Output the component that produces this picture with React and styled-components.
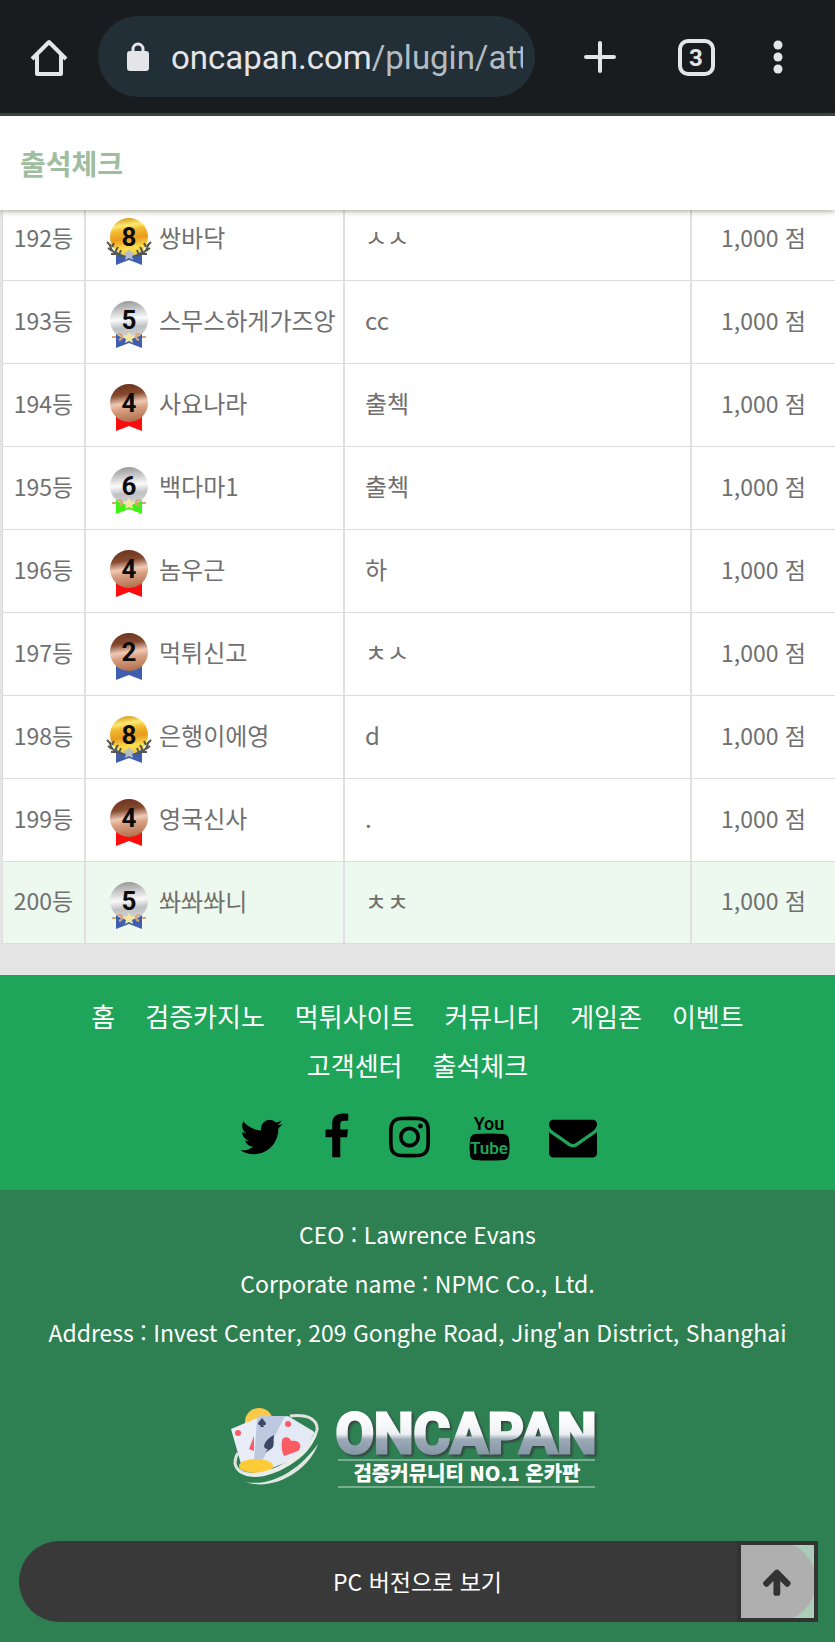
import React from 'react'
import styled, { createGlobalStyle } from 'styled-components';


const GlobalStyle = createGlobalStyle`
    * {
        box-sizing: border-box;
    }
    body {
        margin: 0;
        background: #e5e5e5;
        color: #707070;
        font-family: 'Noto Sans CJK KR', sans-serif;
        font-size: 23px;
    }
    button {
        border: 0;
        padding: 0;
        background: none;
        color: inherit;
        font: inherit;
        cursor: pointer;
    }
    a {
        color: inherit;
        text-decoration: none;
    }
    svg {
        display: block;
    }
`;

const Toolbar = styled.div`
    display: flex;
    align-items: center;
    padding: 16px 23px 16px 0;
    background: #191c1f;
    border-bottom: 3px solid #3b434a;
`;

const ToolButton = styled.button`
    flex: none;
    display: flex;
    align-items: center;
    justify-content: center;
    width: ${props => props.$width}px;
    height: 80px;
    color: #e3e5e8;
`;

const AddressBar = styled.button`
    flex: 1;
    min-width: 0;
    display: flex;
    align-items: center;
    gap: 22px;
    height: 81px;
    margin-right: 17px;
    padding: 0 12px 0 29px;
    border-radius: 41px;
    background: #232f36;
    color: #e3e5e8;
    text-align: left;
`;

const Url = styled.span`
    flex: 1;
    overflow: hidden;
    white-space: nowrap;
    font-family: Roboto, sans-serif;
    font-size: 33px;
    line-height: 48px;
    padding-top: 2px;
`;

const UrlPath = styled.span`
    color: #b4bcc3;
`;

const PageHeader = styled.header`
    position: relative;
    z-index: 1;
    padding: 0 20px;
    background: #fff;
    box-shadow: 0 1px 6px rgba(70, 70, 30, 0.5);
`;

const PageTitle = styled.h1`
    margin: 0;
    font-size: 28px;
    font-weight: 700;
    line-height: 94px;
    color: #a0bd9f;
`;

const Ranking = styled.main`
    margin-top: -12px;
    padding: 0 0 31px 2px;
`;

const Table = styled.table`
    width: 100%;
    table-layout: fixed;
    border-collapse: separate;
    border-spacing: 0;
    border-left: 1px solid #dcdcdc;
    background: #fff;
`;

const Cell = styled.td`
    width: ${props => props.$width ? props.$width + 'px' : 'auto'};
    height: 83px;
    padding: ${props => props.$center ? '0 0 5px' : '0 0 5px 20px'};
    border-bottom: 1px solid #dcdcdc;
    border-right: 2px solid #dfdfdf;
    font-size: ${props => props.$center ? 23 : 24}px;
    text-align: ${props => props.$center ? 'center' : 'left'};
    white-space: nowrap;
    &:last-child {
        border-right: 0;
    }
    tr:last-child > & {
        height: 82px;
        background: #edf8ef;
    }
`;

const Member = styled.div`
    display: flex;
    align-items: center;
    gap: 7px;
`;

const MedalBox = styled.svg`
    flex: none;
    margin-top: 9px;
`;

const SiteNav = styled.nav`
    padding: 16px 60px 29px;
    background: #1fa559;
    color: #fff;
`;

const Links = styled.div`
    display: flex;
    flex-wrap: wrap;
    justify-content: center;
    column-gap: 30px;
    font-size: 26px;
    line-height: 49px;
`;

const Socials = styled.div`
    display: flex;
    justify-content: center;
    gap: 39px;
    margin-top: 24px;
    color: #000;
`;

const Footer = styled.footer`
    padding: 20px 19px 20px;
    background: #2e8052;
    color: #fff;
    text-align: center;
`;

const Info = styled.p`
    margin: 0;
    line-height: 49px;
`;

const LogoLink = styled.a`
    display: flex;
    justify-content: center;
    margin: 42px 0 50px;
`;

const Wordmark = styled.text`
    font-family: Roboto, sans-serif;
    font-size: 56px;
    font-weight: 700;
    text-anchor: middle;
    fill: url(#chrome);
    stroke: url(#chrome);
    stroke-width: 3px;
    filter: drop-shadow(2px 2px 1px #34453f);
`;

const Actions = styled.div`
    position: relative;
`;

const PcButton = styled.button`
    width: 100%;
    height: 81px;
    padding-bottom: 2px;
    border-radius: 41px;
    background: #393939;
    color: #fff;
`;

const TopButton = styled.button`
    position: absolute;
    top: 0;
    right: -2px;
    display: flex;
    align-items: center;
    justify-content: center;
    width: 81px;
    height: 81px;
    border: 4px solid #333;
    background: rgba(255, 255, 255, 0.6);
    color: #333;
`;

const rows = [
    { rank: 192, level: 8, name: '쌍바닥', memo: 'ㅅㅅ' },
    { rank: 193, level: 5, name: '스무스하게가즈앙', memo: 'cc' },
    { rank: 194, level: 4, name: '사요나라', memo: '출첵' },
    { rank: 195, level: 6, name: '백다마1', memo: '출첵' },
    { rank: 196, level: 4, name: '놈우근', memo: '하' },
    { rank: 197, level: 2, name: '먹튀신고', memo: 'ㅊㅅ' },
    { rank: 198, level: 8, name: '은행이에영', memo: 'd' },
    { rank: 199, level: 4, name: '영국신사', memo: '.' },
    { rank: 200, level: 5, name: '쏴쏴쏴니', memo: 'ㅊㅊ' },
];

const menu = ['홈', '검증카지노', '먹튀사이트', '커뮤니티', '게임존', '이벤트', '고객센터', '출석체크'];

const medals = {
    2: { metal: 'bronze', ribbon: '#3f5fae' },
    4: { metal: 'bronze', ribbon: '#fb0d0d' },
    5: { metal: 'silver', ribbon: '#3f5fae' },
    6: { metal: 'silver', ribbon: '#3df312' },
    8: { metal: 'gold', ribbon: '#3f5fae' },
};

const icons = {
    twitter: {
        label: 'Twitter',
        box: '64 0 1664 1792',
        width: 45,
        path: 'M1684 408q-67 98-162 167 1 14 1 42 0 130-38 259.5t-115.5 248.5-184.5 210.5-258 146-323 54.5q-271 0-496-145 35 4 78 4 225 0 401-138-105-2-188-64.5t-114-159.5q33 5 61 5 43 0 85-11-112-23-185.5-111.5t-73.5-205.5v-4q68 38 146 41-66-44-105-115t-39-154q0-88 44-163 121 149 294.5 238.5t371.5 99.5q-8-38-8-74 0-134 94.5-228.5t228.5-94.5q140 0 236 102 109-21 205-78-37 115-142 178 93-10 186-50z',
    },
    facebook: {
        label: 'Facebook',
        box: '384 0 1024 1792',
        width: 27,
        path: 'M1343 12v264h-157q-86 0-116 36t-30 108v189h293l-39 296h-254v759h-306v-759h-255v-296h255v-218q0-186 104-288.5t277-102.5q147 0 228 12z',
    },
    instagram: {
        label: 'Instagram',
        box: '128 0 1536 1792',
        width: 41,
        path: 'M1152 896q0-106-75-181t-181-75-181 75-75 181 75 181 181 75 181-75 75-181zm138 0q0 164-115 279t-279 115-279-115-115-279 115-279 279-115 279 115 115 279zm108-410q0 38-27 65t-65 27-65-27-27-65 27-65 65-27 65 27 27 65zm-502-220q-7 0-76.5-.5t-105.5 0-96.5 3-103 10-71.5 18.5q-50 20-88 58t-58 88q-11 29-18.5 71.5t-10 103-3 96.5 0 105.5.5 76.5-.5 76.5 0 105.5 3 96.5 10 103 18.5 71.5q20 50 58 88t88 58q29 11 71.5 18.5t103 10 96.5 3 105.5 0 76.5-.5 76.5.5 105.5 0 96.5-3 103-10 71.5-18.5q50-20 88-58t58-88q11-29 18.5-71.5t10-103 3-96.5 0-105.5-.5-76.5.5-76.5 0-105.5-3-96.5-10-103-18.5-71.5q-20-50-58-88t-88-58q-29-11-71.5-18.5t-103-10-96.5-3-105.5 0-76.5.5zm768 630q0 229-5 317-10 208-124 322t-322 124q-88 5-317 5t-317-5q-208-10-322-124t-124-322q-5-88-5-317t5-317q10-208 124-322t322-124q88-5 317-5t317 5q208 10 322 124t124 322q5 88 5 317z',
    },
    mail: {
        label: 'E-mail',
        box: '0 0 1792 1792',
        width: 48,
        path: 'M1792 710v794q0 66-47 113t-113 47h-1472q-66 0-113-47t-47-113v-794q44 49 101 87 362 246 497 345 57 42 92.5 65.5t94.5 48 110 24.5h2q51 0 110-24.5t94.5-48 92.5-65.5q170-123 498-345 57-39 100-87zm0-294q0 79-49 151t-122 123q-376 261-468 325-10 7-42.5 31t-54 38.5-52 32.5-57.5 27-50 9h-2q-23 0-50-9t-57.5-27-52-32.5-54-38.5-42.5-31q-91-64-262-182.5t-205-142.5q-62-42-117-115.5t-55-136.5q0-78 41.5-130t118.5-52h1472q65 0 112.5 47t47.5 113z',
    },
};

// gradients shared by every medal in the table
function MedalDefs(){
    return <svg width="0" height="0" style={{ position: 'absolute' }} aria-hidden="true">
                <defs>
                    <linearGradient id="gold" x1="0.35" y1="0" x2="0.5" y2="1">
                        <stop offset="0" stopColor="#d59a1c" />
                        <stop offset="0.2" stopColor="#fdea72" />
                        <stop offset="0.32" stopColor="#f3bd35" />
                        <stop offset="0.55" stopColor="#e99a1c" />
                        <stop offset="0.8" stopColor="#fbe04e" />
                        <stop offset="1" stopColor="#f3c93c" />
                    </linearGradient>
                    <linearGradient id="silver" x1="0.4" y1="0" x2="0.5" y2="1">
                        <stop offset="0" stopColor="#989898" />
                        <stop offset="0.25" stopColor="#cbcbcb" />
                        <stop offset="0.48" stopColor="#fafafa" />
                        <stop offset="0.7" stopColor="#bfc1c3" />
                        <stop offset="1" stopColor="#d5d5d8" />
                    </linearGradient>
                    <linearGradient id="bronze" x1="0.4" y1="0" x2="0.55" y2="1">
                        <stop offset="0" stopColor="#6d3420" />
                        <stop offset="0.27" stopColor="#85492f" />
                        <stop offset="0.5" stopColor="#efc9b5" />
                        <stop offset="0.65" stopColor="#d9a083" />
                        <stop offset="1" stopColor="#b06f4c" />
                    </linearGradient>
                </defs>
            </svg>
}

function Medal({ level }){
    const { metal, ribbon } = medals[level];
    return <MedalBox width="46" height="48" viewBox="0 0 46 48" role="img" aria-label={`레벨 ${level}`}>
                <path d="M10 32h26v16l-13-5-13 5z" fill={ribbon} />
                <circle cx="23" cy="20" r="19" fill={`url(#${metal})`} />
                {metal === 'gold' && <g fill="none" stroke="#55564c" strokeWidth="2">
                    <path d="M4 27c0 6 5 11 13 12" />
                    <path d="M1 25l4 4M8 26l-2 4M2 31l4 3M12 30l-3 5M5 37l6 0M15 33l-2 5" />
                    <path d="M42 27c0 6-5 11-13 12" />
                    <path d="M45 25l-4 4M38 26l2 4M44 31l-4 3M34 30l3 5M41 37l-6 0M31 33l2 5" />
                </g>}
                {metal === 'silver' && <g fill="none" stroke="#dda36e" strokeWidth="2">
                    <path d="M6 37h4M12 34c5-1 5 5 1 6" />
                    <path d="M40 37h-4M34 34c-5-1-5 5-1 6" />
                </g>}
                {metal !== 'bronze' && <path
                    d="M23 32l2 3 4 1-3 3 1 4-4-2-4 2 1-4-3-3 4-1z"
                    fill={metal === 'gold' ? '#b9bfc0' : '#f3e6a0'}
                />}
                <text
                    x="23"
                    y="29"
                    textAnchor="middle"
                    fontFamily="Roboto, sans-serif"
                    fontSize="26"
                    fontWeight="700"
                    fill="#0c0c0c"
                >{level}</text>
            </MedalBox>
}

function SocialIcon({ icon }){
    const { label, box, width, path } = icons[icon];
    return <a href="#" aria-label={label}>
                <svg width={width} height="48" viewBox={box} fill="currentColor">
                    <path d={path} />
                </svg>
            </a>
}

function YoutubeIcon(){
    return <a href="#" aria-label="YouTube">
                <svg
                    width="41"
                    height="48"
                    viewBox="0 0 41 48"
                    fontFamily="Roboto, sans-serif"
                    textAnchor="middle"
                >
                    <text x="20" y="17" fontSize="18" fontWeight="600">You</text>
                    <path d="M6 21q14-1 29 0 5 1 5 6 1 7 0 14-1 6-5 6-14 1-29 0-5 0-5-6-1-7 0-14 0-5 5-6z" />
                    <text x="20" y="41" fontSize="17" fontWeight="600" fill="#1fa559">Tube</text>
                </svg>
            </a>
}

function Logo(){
    return <svg width="375" height="92" viewBox="0 0 375 92" role="img" aria-label="ONCAPAN">
                <defs>
                    <linearGradient id="chrome" x1="0" y1="0" x2="0" y2="1">
                        <stop offset="0.2" stopColor="#ffffff" />
                        <stop offset="0.5" stopColor="#eef1f4" />
                        <stop offset="0.58" stopColor="#9dabb8" />
                        <stop offset="0.8" stopColor="#8596a5" />
                    </linearGradient>
                </defs>
                <circle cx="29" cy="23" r="14" fill="#fdc948" />
                <path d="M1 30l26-11 12 46-28 0z" fill="#e8edf8" />
                <path d="M27 20q1-3 4-3h25L44 68l-20-6z" fill="#bec9df" />
                <path d="M54 19q1-2 4-2l25 15q2 1 1 3L70 58 42 69 32 62z" fill="#e4e9f6" />
                <circle cx="8" cy="34" r="3" fill="#fb5c64" />
                <circle cx="58" cy="25" r="3" fill="#fb5c64" />
                <path d="M32 19l4 5q0 3-3 2l1 2h-4l1-2q-3 1-3-2z" fill="#3d4663" />
                <path d="M24 37l-5 13 5 2z" fill="#fb5c64" />
                <path d="M44 36c-10 5-13 14-6 14l-3 4 6-4c4-2 2-7 3-14z" fill="#3d4663" />
                <path d="M52 42c0-5 8-5 9 0 9-2 12 6 7 10l-14 5c-2-4-3-9-2-15z" fill="#fb5c64" />
                <ellipse cx="26" cy="67" rx="17" ry="7" fill="#fdcb35" />
                <path
                    d="M60 17c19-2 28 4 27 14-4 18-29 38-52 43-17 4-29-1-30-10 0-4 1-7 3-10"
                    fill="none"
                    stroke="#dfe2df"
                    strokeWidth="3"
                />
                <path d="M6 69c8 13 58 3 80-37 1 24-49 54-72 44-5-2-7-4-8-7z" fill="#e9ece9" />
                <path d="M15 83c27 5 54-12 73-38-9 26-44 48-73 38z" fill="#e3e6e3" />
                <Wordmark x="236" y="54">ONCAPAN</Wordmark>
                <path d="M108 61h257M108 88h257" stroke="#c4dccf" strokeWidth="1" />
                <text
                    x="237"
                    y="82"
                    textAnchor="middle"
                    fontFamily="'Noto Sans CJK KR', sans-serif"
                    fontSize="20"
                    fontWeight="900"
                    fill="#fff"
                >검증커뮤니티 NO.1 온카판</text>
            </svg>
}

function BrowserBar(){
    return <Toolbar>
                <ToolButton $width={98} aria-label="홈">
                    <svg width="40" height="40" viewBox="0 0 40 40" fill="none" stroke="currentColor" strokeWidth="4" strokeLinejoin="round">
                        <path d="M3 22L20 5l17 17M8 18v19h24V18" />
                    </svg>
                </ToolButton>
                <AddressBar>
                    <svg width="22" height="30" viewBox="0 0 22 30">
                        <rect y="9" width="22" height="20" rx="3" fill="currentColor" />
                        <path d="M6 10V7a5 5 0 0 1 10 0v3" fill="none" stroke="currentColor" strokeWidth="3" />
                    </svg>
                    <Url>oncapan.com<UrlPath>/plugin/att</UrlPath></Url>
                </AddressBar>
                <ToolButton $width={96} aria-label="새 탭">
                    <svg width="34" height="34" viewBox="0 0 34 34" stroke="currentColor" strokeWidth="4" strokeLinecap="round">
                        <path d="M17 3v28M3 17h28" />
                    </svg>
                </ToolButton>
                <ToolButton $width={96}>
                    <svg width="38" height="38" viewBox="0 0 38 38">
                        <rect x="3" y="3" width="33" height="33" rx="8" fill="none" stroke="currentColor" strokeWidth="4" />
                        <text x="19" y="28" textAnchor="middle" fontFamily="Roboto, sans-serif" fontSize="24" fontWeight="700" fill="currentColor">3</text>
                    </svg>
                </ToolButton>
                <ToolButton $width={68} aria-label="메뉴">
                    <svg width="10" height="34" viewBox="0 0 10 34" fill="currentColor">
                        <circle cx="5" cy="5" r="4.5" />
                        <circle cx="5" cy="17" r="4.5" />
                        <circle cx="5" cy="29" r="4.5" />
                    </svg>
                </ToolButton>
            </Toolbar>
}

export default function App(){
    return <div lang="ko">
                <GlobalStyle />
                <MedalDefs />
                <BrowserBar />
                <PageHeader>
                    <PageTitle>출석체크</PageTitle>
                </PageHeader>
                <Ranking>
                    <Table>
                        <tbody>
                            {rows.map(row => <tr key={row.rank}>
                                <Cell $width={83} $center>{row.rank}등</Cell>
                                <Cell $width={259}>
                                    <Member>
                                        <Medal level={row.level} />
                                        {row.name}
                                    </Member>
                                </Cell>
                                <Cell>{row.memo}</Cell>
                                <Cell $width={143} $center>1,000 점</Cell>
                            </tr>)}
                        </tbody>
                    </Table>
                </Ranking>
                <SiteNav>
                    <Links>
                        {menu.map(item => <a href="#" key={item}>{item}</a>)}
                    </Links>
                    <Socials>
                        <SocialIcon icon="twitter" />
                        <SocialIcon icon="facebook" />
                        <SocialIcon icon="instagram" />
                        <YoutubeIcon />
                        <SocialIcon icon="mail" />
                    </Socials>
                </SiteNav>
                <Footer>
                    <Info>CEO : Lawrence Evans</Info>
                    <Info>Corporate name : NPMC Co., Ltd.</Info>
                    <Info>Address : Invest Center, 209 Gonghe Road, Jing'an District, Shanghai</Info>
                    <LogoLink href="#">
                        <Logo />
                    </LogoLink>
                    <Actions>
                        <PcButton>PC 버전으로 보기</PcButton>
                        <TopButton aria-label="맨 위로">
                            <svg width="32" height="32" viewBox="0 0 1792 1792" fill="currentColor">
                                <path d="M1611 971q0 51-37 90l-75 75q-38 38-91 38-54 0-90-38l-294-293v704q0 52-37.5 84.5t-90.5 32.5h-128q-53 0-90.5-32.5t-37.5-84.5v-704l-294 293q-36 38-90 38t-90-38l-75-75q-38-38-38-90 0-53 38-91l651-651q35-37 90-37 54 0 91 37l651 651q37 39 37 91z" />
                            </svg>
                        </TopButton>
                    </Actions>
                </Footer>
            </div>
}
